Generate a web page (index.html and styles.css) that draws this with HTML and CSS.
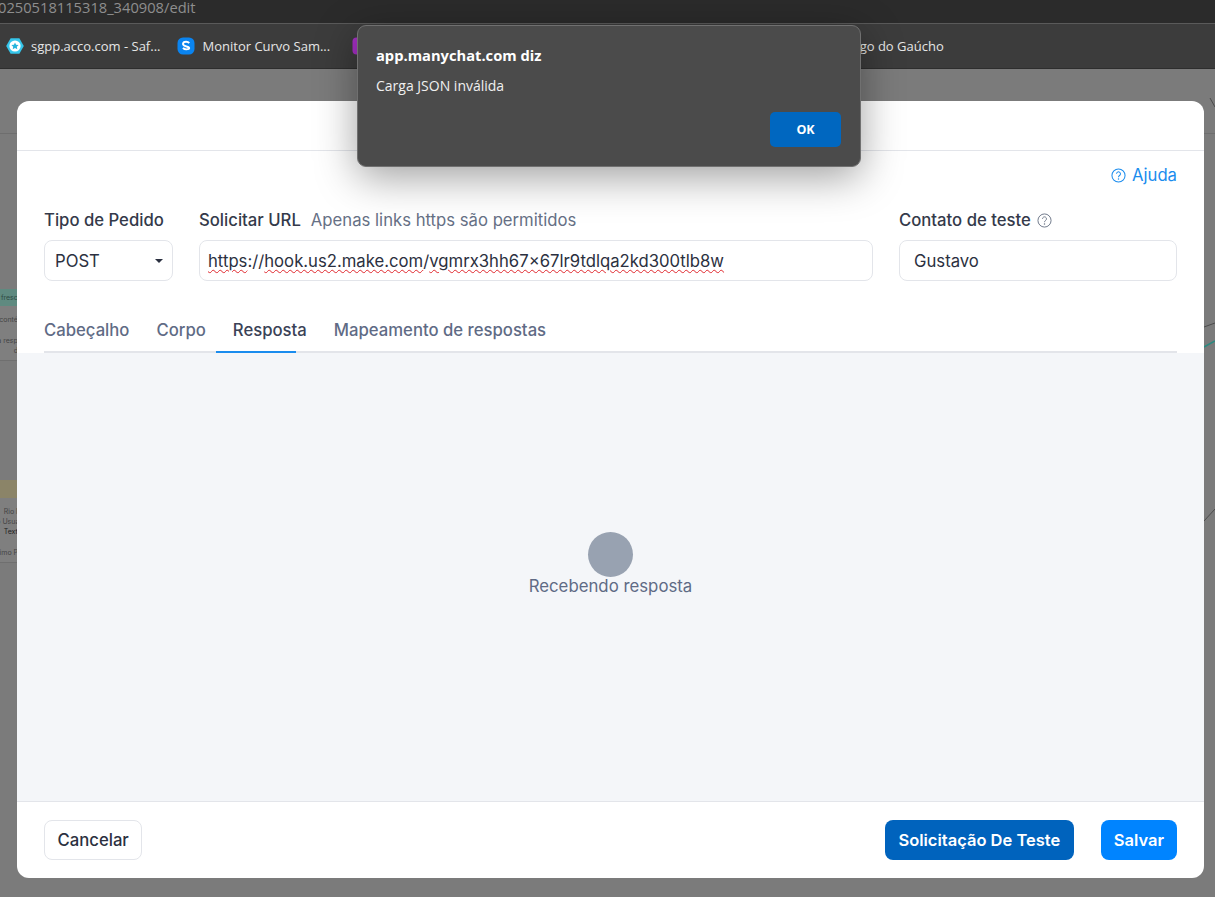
FILE: index.html
```html
<!DOCTYPE html>
<html lang="pt-BR">
<head>
<meta charset="utf-8">
<title>ManyChat</title>
<link rel="stylesheet" href="styles.css">
</head>
<body>
<div class="browser">
  <div class="urlbar"><span class="url">0250518115318_340908/edit</span></div>
  <div class="bookmarks">
    <div class="bookmark">
      <svg class="favicon" viewBox="0 0 18 18"><path d="M4.6 1.2h8.8L17.8 9l-4.4 7.8H4.6L.2 9z" fill="#35c5ea"/><circle cx="9" cy="9" r="5.6" fill="#fff"/><path d="M9 5.4l1.1 2.3 2.5.3-1.8 1.7.5 2.5L9 11.1l-2.3 1.1.5-2.5L5.400 8l2.5-.3z" fill="#25b4dc"/></svg>
      <span>sgpp.acco.com - Saf...</span>
    </div>
    <div class="bookmark">
      <svg class="favicon" viewBox="0 0 18 18"><rect x=".5" y=".5" width="17" height="17" rx="5.500" fill="#0a84f0"/><path d="M12.200 6.100C11.600 5.200 10.500 4.700 9.100 4.700 7.300 4.700 6 5.600 6 7.100c0 3.100 6.200 1.700 6.200 4 0 .8-.9 1.300-2.900 1.300-1.300 0-2.500-.5-3.300-1.500" fill="none" stroke="#fff" stroke-width="1.900"/></svg>
      <span>Monitor Curvo Sam...</span>
    </div>
    <div class="bookmark bookmark-hidden">
      <svg class="favicon" viewBox="0 0 18 18"><rect x=".5" y=".5" width="17" height="17" rx="4" fill="#a52fc4"/></svg>
      <span>Painel</span>
    </div>
    <div class="bookmark bookmark-last">
      <span>Amigo do Gaúcho</span>
    </div>
  </div>

  <div class="stage">
    <div class="canvas">
      <div class="canvas-header"></div>
      <div class="node node-green">
        <div class="node-title">Atualizar fresco</div>
        <p class="node-line first">O contén</p>
        <p class="node-line spaced">da respo</p>
        <p class="node-line">de</p>
      </div>
      <div class="node node-yellow">
        <div class="node-title">&nbsp;</div>
        <p class="node-line first">Rio lo</p>
        <p class="node-line">do Usuar</p>
        <p class="node-line dark">Texto</p>
        <p class="node-line spaced">Ultimo Pa</p>
      </div>
      <svg class="wires" viewBox="0 0 1215 828">
        <path d="M1204 258 L1215 254" stroke="#4c4c4c" fill="none"/>
        <path d="M1204 278 L1215 272" stroke="#2a8a80" stroke-width="1.500" fill="none"/>
        <path d="M1204 452 L1215 440" stroke="#4c4c4c" fill="none"/>
        <path d="M1210 29 L1215 38" stroke="#4c4c4c" fill="none"/>
      </svg>
    </div>

    <section class="modal">
      <header class="modal-header"></header>
      <div class="modal-top">
        <div class="help-row">
          <a class="help-link">
            <svg class="help-icon" viewBox="0 0 16 16"><circle cx="8" cy="8" r="7" fill="none" stroke="currentColor" stroke-width="1.100"/><path d="M5.900 6.200a2.100 2.100 0 1 1 3.200 1.800C8.400 8.500 8 8.900 8 9.800" fill="none" stroke="currentColor" stroke-width="1.100"/><circle cx="8" cy="11.700" r=".8" fill="currentColor"/></svg>
            Ajuda
          </a>
        </div>
        <div class="fields">
          <div class="field field-method">
            <div class="field-label">Tipo de Pedido</div>
            <div class="control select"><span>POST</span><i class="caret"></i></div>
          </div>
          <div class="field field-url">
            <div class="field-label">Solicitar URL <span class="hint">Apenas links https são permitidos</span></div>
            <div class="control url-input"><span class="typo">https</span>://<span class="typo">hook.us2.make.com</span>/<span class="typo">vgmrx3hh67×67lr9tdlqa2kd300tlb8w</span></div>
          </div>
          <div class="field field-contact">
            <div class="field-label">Contato de teste
              <svg class="label-icon" viewBox="0 0 16 16"><circle cx="8" cy="8" r="7" fill="none" stroke="currentColor" stroke-width="1"/><path d="M5.900 6.200a2.100 2.100 0 1 1 3.200 1.800C8.400 8.500 8 8.900 8 9.800" fill="none" stroke="currentColor" stroke-width="1"/><circle cx="8" cy="11.700" r=".8" fill="currentColor"/></svg>
            </div>
            <div class="control contact-input">Gustavo</div>
          </div>
        </div>
        <nav class="tabs">
          <span class="tab">Cabeçalho</span>
          <span class="tab">Corpo</span>
          <span class="tab tab-active">Resposta</span>
          <span class="tab">Mapeamento de respostas</span>
          <i class="tab-indicator"></i>
        </nav>
      </div>
      <div class="modal-body">
        <div class="spinner"></div>
        <div class="status">Recebendo resposta</div>
      </div>
      <footer class="modal-footer">
        <button class="btn btn-ghost">Cancelar</button>
        <div class="footer-actions">
          <button class="btn btn-dark">Solicitação De Teste</button>
          <button class="btn btn-primary">Salvar</button>
        </div>
      </footer>
    </section>
  </div>

  <div class="alert" role="alertdialog">
    <div class="alert-title">app.manychat.com diz</div>
    <div class="alert-message">Carga JSON inválida</div>
    <div class="alert-actions"><button class="alert-ok">OK</button></div>
  </div>
</div>
</body>
</html>
```
FILE: styles.css
```css
* { box-sizing: border-box; }
html, body { margin: 0; height: 100%; }
body { background: #7b7b7b; font-family: Inter, "Liberation Sans", sans-serif; overflow: hidden; }

.browser { position: relative; display: flex; flex-direction: column; height: 897px; overflow: hidden; }

.urlbar { height: 24px; background: #2b2b2b; border-bottom: 1px solid #5a5a5a; overflow: hidden; }
.url { display: block; margin-left: -2px; font: 14.7px/15px "Open Sans", sans-serif; color: #8e8e8e; }

.bookmarks { display: flex; align-items: center; height: 45px; padding-left: 6px; background: #3c3c3c; border-bottom: 1px solid #2e2e2e; font: 13px/18px "Open Sans", sans-serif; color: #e6e6e6; white-space: nowrap; }
.bookmark { display: flex; align-items: center; gap: 7px; margin-right: 17px; }
.favicon { width: 18px; height: 18px; flex: none; }
.bookmark-hidden { margin-left: 5px; }
.bookmark-last { margin-left: 405px; margin-right: 0; }

.stage { position: relative; flex: 1; padding: 32px 11px 19px 17px; display: flex; }
.canvas { position: absolute; inset: 0; overflow: hidden; }
.canvas-header { height: 65px; border-bottom: 1px solid #6e6e6e; }
.wires { position: absolute; inset: 0; width: 100%; height: 100%; }
.node { position: absolute; left: -100px; width: 122px; background: #7f7f7f; border-bottom: 1px solid #6f6f6f; text-align: right; font-size: 7px; color: #444; overflow: hidden; white-space: nowrap; }
.node-green { top: 220px; height: 72px; }
.node-yellow { top: 411px; height: 83px; }
.node-title { height: 18px; line-height: 18px; color: #2f4a44; }
.node-green .node-title { height: 17px; line-height: 17px; background: #5f8a80; }
.node-yellow .node-title { background: #8b8468; }
.node-line { margin: 0; height: 10px; line-height: 10px; }
.node-line.first { margin-top: 9px; }
.node-line.spaced { margin-top: 11px; }
.node-line.dark { color: #222; }

.modal { position: relative; flex: 1; display: flex; flex-direction: column; background: #fff; border-radius: 12px; overflow: hidden; }
.modal-header { height: 50px; flex: none; border-bottom: 1px solid #e3e5ea; }
.modal-top { flex: none; height: 202px; padding: 0 27px; display: flex; flex-direction: column; }

.help-row { display: flex; justify-content: flex-end; height: 57px; padding-top: 13px; }
.help-link { display: flex; align-items: center; gap: 6px; height: 22px; font-size: 16.7px; color: #1a8cee; }
.help-icon { width: 15px; height: 15px; }

.fields { display: flex; gap: 26px; }
.field { display: flex; flex-direction: column; gap: 8px; }
.field-method { width: 129px; flex: none; }
.field-url { flex: 1; }
.field-contact { width: 278px; flex: none; }
.field-label { display: flex; align-items: center; gap: 6px; height: 24px; font-size: 16.7px; font-weight: 500; color: #343a4a; white-space: nowrap; }
.hint { margin-left: 4px; font-weight: 400; color: #667085; }
.label-icon { width: 15px; height: 15px; color: #6a7385; }
.control { display: flex; align-items: center; height: 41px; border: 1px solid #e3e5ea; border-radius: 8px; font-size: 16.7px; color: #2b3040; white-space: pre; }
.select { justify-content: space-between; padding: 0 9px 0 10px; }
.caret { width: 0; height: 0; border-left: 4px solid transparent; border-right: 4px solid transparent; border-top: 4px solid #2b3040; }
.url-input { padding-left: 8px; }
.typo { text-decoration: underline wavy #e0282e 1px; text-underline-offset: 2px; }
.contact-input { padding-left: 14px; }

.tabs { position: relative; display: flex; gap: 27px; height: 35px; margin-top: 37px; border-bottom: 2px solid #e3e5ea; font-size: 16.7px; font-weight: 500; color: #5f6b85; }
.tab { line-height: 24px; }
.tab-active { color: #3a4256; }
.tab-indicator { position: absolute; left: 172px; bottom: -2px; width: 80px; height: 2px; background: #1a8cee; }

.modal-body { flex: 1; display: flex; flex-direction: column; align-items: center; padding-top: 179px; background: #f4f6f9; }
.spinner { width: 45px; height: 45px; border-radius: 50%; background: #98a2b1; }
.status { margin-top: -1px; line-height: 20px; font-size: 16.8px; color: #5f6b85; }

.modal-footer { flex: none; display: flex; justify-content: space-between; align-items: flex-start; height: 77px; padding: 18px 27px 0; border-top: 1px solid #e3e5ea; }
.footer-actions { display: flex; gap: 27px; }
.btn { height: 40px; padding: 0 13px; border-radius: 8px; border: 0; font: 500 16.7px Inter, "Liberation Sans", sans-serif; cursor: pointer; }
.btn-ghost { padding: 0 12.5px; background: #fff; border: 1px solid #e3e5ea; color: #2b3040; }
.btn-dark { padding: 0 13.5px; background: #0063bd; color: #fff; font-weight: 600; font-size: 16.5px; }
.btn-primary { background: #0084ff; color: #fff; font-weight: 600; font-size: 16.5px; }

.alert { position: absolute; left: 357px; top: 25px; width: 504px; height: 142px; padding: 19px 19px 0 18px; background: #4b4b4b; border: 1px solid #707070; border-radius: 9px; box-shadow: 0 10px 42px rgba(0, 0, 0, .38); color: #fff; font-family: "Open Sans", sans-serif; display: flex; flex-direction: column; }
.alert-title { font-size: 14.7px; line-height: 20px; font-weight: 700; }
.alert-message { margin-top: 11px; font-size: 14px; line-height: 20px; color: #f0f0f0; }
.alert-actions { display: flex; justify-content: flex-end; margin-top: 16px; }
.alert-ok { width: 71px; height: 35px; border: 0; border-radius: 5px; background: #0067c0; color: #fff; font: 700 12.5px "Open Sans", sans-serif; }
```
